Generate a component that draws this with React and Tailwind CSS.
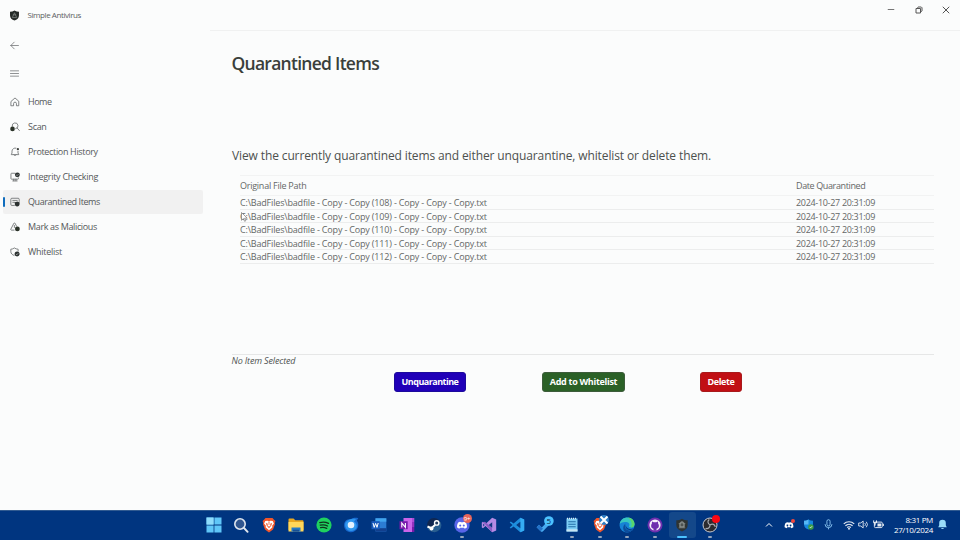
import React from "react";

const S = ({ size = 16, vb = 16, children, className = "" }) => (
  <svg width={size} height={size} viewBox={`0 0 ${vb} ${vb}`} fill="none" className={"shrink-0 " + className}>
    {children}
  </svg>
);

const ShieldPath = "M8 .8C10 2.1 12.200 2.700 14.500 2.700V8c0 3.700-2.700 6-6.500 7.300C4.200 14 1.500 11.700 1.500 8V2.700C3.800 2.700 6 2.100 8 .8z";

const line = { stroke: "#686b6d", strokeWidth: 1.3, strokeLinecap: "round", strokeLinejoin: "round" };

const navIcons = {
  home: (
    <S size={10}><path d="M2 6.800 8 1.500l6 5.300V14H10.300v-3.500a2.300 2.300 0 0 0-4.600 0V14H2z" {...line} /></S>
  ),
  scan: (
    <S size={10}>
      <path d="M3.500 7A4.700 4.700 0 1 1 9 10.800M11.300 9.500l3.700 4.200" {...line} />
      <circle cx="4" cy="11" r="3.700" fill="#2b3329" />
    </S>
  ),
  bell: (
    <S size={10}>
      <path d="M9.500 1.800A5 5 0 0 0 3.200 6.500v3L2 12.200h12L12.800 9.500V7M6.200 12.500a2 2 0 0 0 3.600 0" {...line} />
      <circle cx="12.600" cy="3.500" r="1.800" fill="#3b3f3b" />
    </S>
  ),
  integrity: (
    <S size={10}>
      <path d="M8 2H2.500a1 1 0 0 0-1 1v7.500a1 1 0 0 0 1 1h10a1 1 0 0 0 1-1V9.500M6 11.500V14M9.500 11.500V14M4.500 14.300h7" {...line} />
      <circle cx="11.800" cy="4.500" r="3.900" fill="#2b3030" />
      <path d="m10 4.600 1.400 1.300 2.200-2.600" stroke="#c9cccb" strokeWidth="1" />
    </S>
  ),
  quarantine: (
    <S size={10}>
      <path d="M7 13.500H3A1.700 1.700 0 0 1 1.300 11.800V3.700A1.700 1.700 0 0 1 3 2h10a1.700 1.700 0 0 1 1.700 1.700V7M4.500 5.500h7M4.500 8.500h3" {...line} />
      <path d="M11.500 7.200c1.200.8 2.400 1 3.800 1v2.800c0 2.200-1.400 3.500-3.800 4.300-2.400-.8-3.800-2.100-3.800-4.300V8.200c1.400 0 2.600-.2 3.800-1z" fill="#2b3030" />
    </S>
  ),
  mark: (
    <S size={10}>
      <path d="M6.500 13H2.200a1 1 0 0 1-.9-1.500L6.200 2a1 1 0 0 1 1.800 0l2.500 4.700M7 5.500v3.300" {...line} />
      <circle cx="11.800" cy="11" r="3.900" fill="#2b3329" />
    </S>
  ),
  whitelist: (
    <S size={10}>
      <path d="M6.500 13.500C3.500 12.500 1.300 10.500 1.300 7V3.500c2.200 0 4-.7 5.700-2 1.700 1.300 3.800 2 6 2v3" {...line} />
      <circle cx="11.300" cy="11" r="4" fill="#2b3030" />
      <path d="m9.500 11.200 1.400 1.300 2.300-2.700" stroke="#c9cccb" strokeWidth="1" />
    </S>
  ),
};

const nav = [
  ["home", "Home", "tracking-[-0.500px]"],
  ["scan", "Scan", "tracking-[-0.300px]"],
  ["bell", "Protection History", "tracking-[-0.340px]"],
  ["integrity", "Integrity Checking", "tracking-[-0.280px]"],
  ["quarantine", "Quarantined Items", "tracking-[-0.420px]"],
  ["mark", "Mark as Malicious", "tracking-[-0.350px]"],
  ["whitelist", "Whitelist", "tracking-[-0.260px]"],
];

const rows = [108, 109, 110, 111, 112];

const BraveShape = () => (
  <>
    <path d="M4.500 1h7l1.500 1.700 1.400 1.200-.7 2 .3 1.300-2 5.300L8 15.600 4 12.500 2 7.200l.3-1.300-.7-2L3 2.700z" fill="#f1562b" />
    <path d="M4.300 4 6.500 3.800 8 4.300l1.500-.5 2.200.2 1.200 2.500-1.800 2.200.3 1.500L8 13.300l-3.400-3.100.3-1.500-1.800-2.200z" fill="#fff" />
    <path d="m4.800 6 2 .7-.3 1.700L8 9.800l1.500-1.400-.3-1.700 2-.7-1 2.800L8 11.300 5.800 8.800zM7.500 4.500h1L8.300 8h-.6z" fill="#f1562b" />
  </>
);
const DiscordFace = ({ fill = "#fff" }) => (
  <path fillRule="evenodd" fill={fill} d="M5.500 4.300 7 4.800h2l1.500-.5 2 .9c1.200 1.900 1.500 3.800 1.300 5.800l-2.600 1.300-.8-1.200H5.600l-.8 1.200L2.200 11C2 9 2.300 7.100 3.500 5.200zM5.900 7.300a1.150 1.250 0 1 0 .01 0zM10.100 7.300a1.150 1.250 0 1 0 .01 0z" />
);

const apps = [
  { n: "start", el: <S><path d="M.5.500H7.600V7.600H.5zM8.400.500h7.100V7.600H8.400zM.5 8.400H7.600v7.100H.5zM8.400 8.400h7.100v7.100H8.400z" fill="#5fc6f8" /><path d="M.5.500H7.600V7.600H.5z" fill="#8fdcfb" /></S> },
  { n: "search", el: <S><circle cx="7" cy="7" r="5.200" fill="#30568f" stroke="#dfe6ee" strokeWidth="1.600" /><path d="m11 11 3.600 3.800" stroke="#dfe6ee" strokeWidth="1.900" strokeLinecap="round" /></S> },
  { n: "brave", el: <S><BraveShape /></S> },
  { n: "files", el: <S><path d="M.5 2.500Q.500 1.500 1.500 1.500H5.500L7.300 3.200H14.500q1 0 1 1V13H.5z" fill="#e9a820" /><path d="M.5 5H15.500v9.500H.5z" fill="#ffd75a" /><path d="M3.500 10.500h9v4h-9z" fill="#2479c4" /><path d="M5 12.700h6v1.800H5z" fill="#174f95" /></S> },
  { n: "spotify", el: <S><circle cx="8" cy="8" r="7.600" fill="#1fd15f" /><path d="M3.800 5.600c3-.9 6.200-.6 8.700.8M4.200 8.200c2.600-.7 5.200-.4 7.400.8M4.600 10.600c2.200-.5 4.200-.3 6.100.8" stroke="#10331d" strokeWidth="1.300" strokeLinecap="round" /></S> },
  { n: "thunderbird", el: <S><path d="M1.200 6.500C2 3 5 1.600 8 2.300 10 .800 13 .500 15.300 1.300L13.800 3.500c1.700 2 2 5 .8 7.500-1.500 3.300-5 4.700-8.300 4C2.500 14.200.500 10.500 1.200 6.500z" fill="#1769cf" /><path d="M2.500 5.500C5 2 9 1 13 2L11 4.500c2.500 1.500 3.300 4 2.500 6.500-1.500 2.500-5 3.500-8 2.500-3-1.500-4-5-3-8z" fill="#2f97ef" /><circle cx="8" cy="8" r="3.300" fill="#e3f1fe" /></S> },
  { n: "word", el: <S><path d="M4.500 1.300h10.800v13.200H4.500z" fill="#2b7cd3" /><path d="M4.500 1.300h10.800v3.400H4.500z" fill="#41a5ee" /><path d="M4.500 11.200h10.800v3.300H4.500z" fill="#123f8d" /><path d="M.5 4.200h8.200v8H.5z" fill="#185abd" /><path d="m2 6 1.200 4.400L4.600 6.400 6 10.400 7.200 6" stroke="#fff" strokeWidth="1" /></S> },
  { n: "onenote", el: <S><path d="M4.500 1h9.500v14H4.500z" fill="#ca64ea" /><path d="M13 1h2.300v4H13z" fill="#ae4bd5" /><path d="M13 5h2.300v5H13z" fill="#9332bf" /><path d="M13 10h2.300v5H13z" fill="#7719aa" /><path d="M.5 4.200h8.200v8H.5z" fill="#7719aa" /><path d="M2.800 10.400V6l3.600 4.400V6" stroke="#fff" strokeWidth="1.100" /></S> },
  { n: "steam", el: <S><circle cx="8" cy="8" r="7" fill="#102750" /><path d="M1 9.500 5.500 11 9 8l1.500-3.500L14.500 5a7 7 0 0 1-8.500 9.800A7 7 0 0 1 1 9.500z" fill="#285e91" /><path d="m1.500 9.500 3.800 1.700L9 8" stroke="#fff" strokeWidth="2" /><circle cx="5.500" cy="11.500" r="2" fill="#fff" /><circle cx="10.700" cy="5.900" r="2.900" fill="#fff" /><circle cx="10.700" cy="5.900" r="1.500" fill="#223c60" /></S> },
  { n: "discord", run: true, badge: "9+", el: <S><circle cx="8" cy="8" r="7.700" fill="#5765e9" /><g transform="translate(1.200 1.200) scale(.85)"><DiscordFace /></g></S> },
  { n: "vs", el: <S><path d="m11.200.8 4 1.800v10.800l-4 1.800L4.500 9.100 2 11.200.8 10.500v-5L2 4.800l2.500 2.100z" fill="#b68be4" /><path d="M.8 5.500 2 4.800l9.200 10.400-.2-4.400L4 4.800z" fill="#8a5bc4" /><path d="M11.200 5.200v5.600L7.700 8zM2.200 6.500v3L3.700 8z" fill="#123a82" /></S> },
  { n: "vscode", el: <S><path d="m11.300.8 3.900 1.700v11L11.300 15.200 4.600 9.500 1.800 11.500.7 10.600 3.500 8 .7 5.400l1.100-.9 2.800 2z" fill="#1e8fdd" /><path d="M11.300.800 15.200 2.500v11L11.300 15.200z" fill="#35adf3" /><path d="M11.300 4.800v6.400L7.200 8z" fill="#063a80" /></S> },
  { n: "todo", el: <S size={18} vb={18}><path d="m1.800 10 4 4L12.500 7" stroke="#48aaf0" strokeWidth="3.400" strokeLinejoin="round" /><path d="m1.800 10 4 4" stroke="#2371c8" strokeWidth="3.400" /><circle cx="12.900" cy="5" r="4.800" fill="#4cc2ff" /><text x="12.900" y="7.900" textAnchor="middle" fontSize="8" fontFamily="Open Sans, sans-serif" fill="#0b2447">5</text></S> },
  { n: "notepad", run: true, el: <S><path d="M2.500 1.500h11v13h-11z" fill="#7ccdf4" /><path d="M2.500 12.300h11v2.200h-11z" fill="#c6e6f4" /><path d="M3 1.500h10" stroke="#d7eef8" strokeWidth="1.400" strokeDasharray="1 1" /><path d="M4.300 4.700h7.400M4.300 7.200h7.400M4.300 9.700h7.400" stroke="#226fa7" strokeWidth="1.100" /></S> },
  { n: "brave2", run: true, el: <div className="relative"><S><BraveShape /></S><svg width="10" height="10" viewBox="0 0 10 10" className="absolute -right-[1px] -top-[2px]"><circle cx="5" cy="5" r="4.900" fill="#2f7fc5" /><path d="m1.500 1.500 7 7M8.500 1.500l-7 7" stroke="#fff" strokeWidth="2" /></svg></div> },
  { n: "edge", run: true, el: <S><circle cx="8" cy="8" r="7.500" fill="#1683d5" /><path d="M.7 6.800C1.500 2.500 5 .500 8.300.500c4.400 0 7.300 3.300 7.200 6.700 0 2-1.600 3.300-3.500 3.300-1.800 0-2.500-.8-1.800-1.700.8-1.300-.2-3.500-2.800-3.800C4.600 4.600 2 5.500.7 6.800z" fill="#39c6c0" /><path d="M9 .600c4 .3 6.600 3.300 6.500 6.600 0 2-1.600 3.300-3.500 3.300 1.500-3.500.5-7-3-9.900z" fill="#59d66b" /><path d="M6.700 6.500c-2 2.500-.4 6.700 3.600 6.900 1.500 0 3-.5 4-1.400A7.500 7.500 0 0 1 6.500 15.300C3.500 13.500 3.300 8.500 6.700 6.500z" fill="#0d4c9b" /><path d="M7 7.500c-.5 2 1 4.500 4.500 4.500 1.300 0 2.400-.3 3.200-.7-.8.900-2.200 1.600-4 1.600-3.500 0-5-3-3.700-5.400z" fill="#063a80" /></S> },
  { n: "github", run: true, el: <S><circle cx="8" cy="8" r="7.500" fill="#6e2fae" /><circle cx="8" cy="8" r="5.600" fill="#f4effa" /><path d="M6.500 13.800v-2C4.500 11.500 3.900 9.800 4.200 8c.1-.7.400-1.100.7-1.500L5 4.500l1.700.8h2.600L11 4.500l.1 2c.400.4.6.8.7 1.500.3 1.800-.3 3.500-2.300 3.800v2z" fill="#6e2fae" /></S> },
  { n: "antivirus", run: true, active: true, el: <S size={14}><path d={ShieldPath} fill="#2f3432" /><path d="M8 4.200c1.500 0 2.600 1.200 2.600 2.800v3.500H5.400V7c0-1.600 1.100-2.800 2.600-2.800zM4.300 11.200h7.400M4.200 6.500h7.600" fill="#858b89" stroke="#858b89" strokeWidth=".9" /><path d="M8 5.500v4M6.300 8h3.400" stroke="#2f3432" strokeWidth=".9" /></S> },
  { n: "obs", run: true, dot: true, el: <S><circle cx="8" cy="8" r="7" fill="#2c2b2f" stroke="#c8cad0" strokeWidth="1" /><path d="M8 7.800C5.500 6.500 5.500 4 7 2.800M8.200 7.800c2.400-1.400 4.600-.2 4.900 1.700M8 8c0 2.800-2.200 4.200-4 3.400" stroke="#a9acb2" strokeWidth="1.200" strokeLinecap="round" /></S> },
];

function TitleBar() {
  return (
    <header className="flex h-[30px] shrink-0 items-start">
      <div className="flex h-[30px] flex-1 items-center pl-[9px]">
        <S size={11}><path d={ShieldPath} fill="#252b28" /><path d="M8 4 4.800 11h6.400zM5.500 7h5" stroke="#868c89" strokeWidth="1" /></S>
        <span className="ml-[7.500px] text-[8px] leading-[12px] tracking-[-0.420px] text-[#5c5f61]">Simple Antivirus</span>
      </div>
      <div className="flex h-[19px] items-center">
        <div className="flex w-[27.500px] justify-center"><S size={8}><path d="M1.500 7h13" stroke="#666" strokeWidth="1.800" /></S></div>
        <div className="flex w-[27.500px] justify-center"><S size={8}><path d="M2 5h9v9H2zM5 3.500 6 2h6.500L14 3.500V10l-1.500 1.500" stroke="#555" strokeWidth="2" strokeLinejoin="round" /></S></div>
        <div className="flex w-[27.500px] justify-center"><S size={8}><path d="m1.500 1.500 13 13M14.500 1.500l-13 13" stroke="#555" strokeWidth="2" /></S></div>
      </div>
    </header>
  );
}

function Sidebar() {
  return (
    <aside className="flex w-[203px] shrink-0 flex-col">
      <div className="flex h-[30px] items-center pl-[10px]"><S size={9}><path d="M15 8H1.500M7.500 2 1.500 8l6 6" {...line} /></S></div>
      <div className="flex h-[26px] items-center pl-[10px]"><S size={9}><path d="M.8 3.300h14.400M.8 8h14.400M.8 12.700h14.400" {...line} /></S></div>
      <nav className="mt-[4px] flex flex-col gap-[1px] pl-[3px]">
        {nav.map(([id, label, track]) => (
          <div key={id} className={"flex h-6 items-center rounded-[2px] " + (id === "quarantine" ? "bg-[#f1f1f1]" : "")}>
            <span className={"h-[10px] w-[2px] rounded-full " + (id === "quarantine" ? "bg-[#0f6cbd]" : "")} />
            <span className="ml-[5px] flex w-[10px] justify-center">{navIcons[id]}</span>
            <span className={"ml-2 whitespace-nowrap text-[9px] leading-3 text-[#55585a] " + track}>{label}</span>
          </div>
        ))}
      </nav>
    </aside>
  );
}

function Content() {
  return (
    <main className="flex min-w-0 flex-1 flex-col border-t border-[#f0f1f1] pl-[21.500px] pr-[26px]">
      <h1 className="mt-[20px] whitespace-nowrap text-[17.500px] font-semibold leading-[25px] tracking-[-0.730px] text-[#3a3f3b]">Quarantined Items</h1>
      <p className="mt-[71px] whitespace-nowrap pl-[0.500px] text-[12px] leading-[18px] tracking-[-0.120px] text-[#4c504e]">View the currently quarantined items and either unquarantine, whitelist or delete them.</p>
      <section className="mt-[10px] flex h-[180px] flex-col border-b border-[#e6e7e7]">
        <div className="ml-[8.500px] flex h-[21px] items-center border-y border-[#f2f3f3] pt-[1px] text-[9px] leading-[12px] text-[#646766]">
          <span className="w-[556px]"><span className="tracking-[-0.250px]">Original File Path</span></span>
          <span className="tracking-[-0.380px]">Date Quarantined</span>
        </div>
        {rows.map((n) => (
          <div key={n} className="ml-[8.500px] flex h-[13.500px] items-center border-b border-[#eceded] pt-[2px] text-[9px] leading-[12px] text-[#646766]">
            <span className="relative w-[556px] whitespace-nowrap">
              <span className="tracking-[-0.175px]">C:\BadFiles\badfile - Copy - Copy ({n}) - Copy - Copy - Copy.txt</span>
              {n === 109 && (
                <svg width="7" height="10" viewBox="0 0 7 10" className="absolute left-[1px] top-[1px]"><path d="M.5.5v7.800l1.900-1.700 1.200 2.700 1.200-.5L3.600 6.200h2.600z" fill="#fff" stroke="#777" strokeWidth=".7" /></svg>
              )}
            </span>
            <span className="tracking-[-0.310px]">2024-10-27 20:31:09</span>
          </div>
        ))}
      </section>
      <p className="text-[9px] italic leading-[12px] tracking-[-0.150px] text-[#4f5352]">No Item Selected</p>
      <div className="mt-[5px] flex pl-[162.500px] text-[9px] font-bold leading-[12px] text-white">
        <button className="h-[20px] w-[72px] whitespace-nowrap rounded-[3px] border border-[#1c0a9c] bg-[#2000b8] tracking-[-0.520px]">Unquarantine</button>
        <button className="ml-[76px] h-[20px] w-[83px] whitespace-nowrap rounded-[3px] border border-[#3d5c3b] bg-[#2b6127] tracking-[-0.300px]">Add to Whitelist</button>
        <button className="ml-[75px] h-[20px] w-[42px] whitespace-nowrap rounded-[3px] border border-[#a81a1c] bg-[#c10f14] tracking-[-0.380px]">Delete</button>
      </div>
    </main>
  );
}

function Taskbar() {
  return (
    <footer className="flex h-[30px] shrink-0 items-center border-t border-[#315b91] bg-[#003580] pb-[2px] pl-[199.800px] text-white">
      {apps.map((a) => (
        <div key={a.n} className={"relative flex h-[26px] w-[27.580px] shrink-0 items-center justify-center rounded-[3px] " + (a.active ? "bg-[#14488a]" : "")}>
          {a.el}
          {a.badge && <span className="absolute right-[4px] top-[2.500px] flex h-[9px] w-[9px] items-center justify-center rounded-full bg-[#e8655b] text-[6px] leading-none text-white">{a.badge}</span>}
          {a.dot && <span className="absolute right-[4px] top-[3px] h-[8px] w-[8px] rounded-full bg-[#fb0712]" />}
          {a.run && <span className={"absolute bottom-0 h-[2px] rounded-full " + (a.active ? "w-[10px] bg-[#4cc2ff]" : "w-[4px] bg-[#93a5bd]")} />}
        </div>
      ))}
      <div className="ml-[35.200px] flex items-center">
        <div className="flex w-5 justify-center"><S size={8}><path d="m2 11 6-6 6 6" stroke="#fff" strokeWidth="2" /></S></div>
        <div className="relative flex w-5 justify-center"><S size={12}><DiscordFace /></S><span className="absolute right-[4px] top-[0px] h-1 w-1 rounded-full bg-[#f0473c]" /></div>
        <div className="flex w-5 justify-center"><S size={11}><path d={ShieldPath} fill="#1689df" /><path d="M8 .8V8H1.500V2.700C4 2.700 6 2 8 .8z" fill="#56b8f5" /><circle cx="11.500" cy="11.500" r="4" fill="#3b9b45" /><path d="m9.800 11.600 1.300 1.300 2.200-2.500" stroke="#fff" /></S></div>
        <div className="flex w-5 justify-center"><S size={11}><rect x="5.700" y="1" width="4.600" height="9" rx="2.300" stroke="#8dc9f5" strokeWidth="1.300" /><path d="M3 7.500a5 5 0 0 0 10 0M8 12.500V15" stroke="#8dc9f5" strokeWidth="1.300" /></S></div>
        <div className="ml-[3px] flex w-[14px] justify-center"><S size={12}><path d="M1 6.500a10 10 0 0 1 14 0M3.200 9a7 7 0 0 1 9.600 0M5.500 11.300a4 4 0 0 1 5 0" stroke="#e4eaf2" strokeWidth="1.500" /><circle cx="8" cy="13" r="1.300" fill="#e4eaf2" /></S></div>
        <div className="flex w-[15px] justify-center"><S size={11}><path d="M1 5.800h3L7.500 3v10L4 10.200H1zM10 6a3 3 0 0 1 0 4M12 4a6 6 0 0 1 0 8" stroke="#e4eaf2" strokeWidth="1.300" /></S></div>
        <div className="flex w-[16px] justify-center"><S size={11}><rect x="2" y="4.500" width="11.500" height="8" rx="1.500" stroke="#e4eaf2" strokeWidth="1.400" /><path d="M6.500 6.500h5.500v4.500H6.500zM14.500 7h1.300v3h-1.300z" fill="#e4eaf2" /><path d="M1 2v3.500h4V2M3 5.500v4" stroke="#fff" strokeWidth="1.400" /></S></div>
      </div>
      <div className="flex w-[46px] shrink-0 flex-col items-end whitespace-nowrap text-[8px] leading-[10px] tracking-[-0.340px]"><span>8:31 PM</span><span>27/10/2024</span></div>
      <S size={11} className="ml-[4px]"><path d="M8 1a4.800 4.800 0 0 0-4.800 4.800V9L1.800 12h12.400l-1.400-3V5.800A4.800 4.800 0 0 0 8 1zM5.800 13a2.300 2.300 0 0 0 4.400 0z" fill="#9adcf8" /></S>
    </footer>
  );
}

export default function App() {
  return (
    <div className="flex h-[540px] w-[960px] flex-col overflow-hidden bg-[#fbfcfc] font-['Open_Sans',sans-serif]">
      <TitleBar />
      <div className="flex min-h-0 flex-1">
        <Sidebar />
        <div className="flex min-w-0 flex-1 pl-[7px]">
          <Content />
        </div>
      </div>
      <Taskbar />
    </div>
  );
}
